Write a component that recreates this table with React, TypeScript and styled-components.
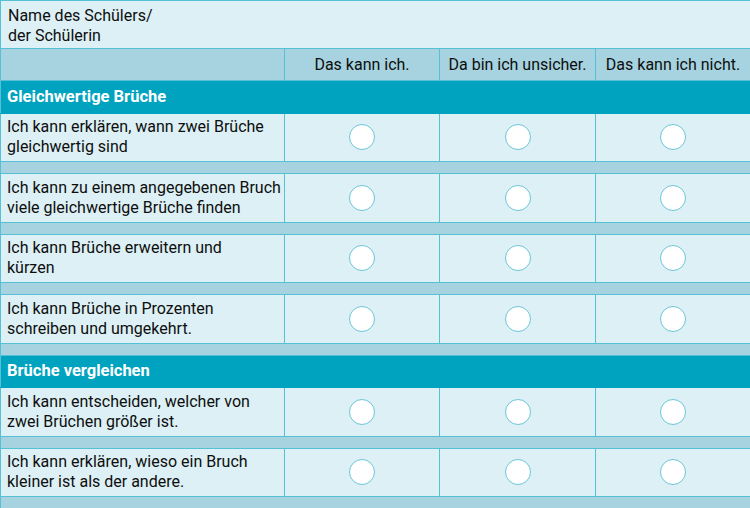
import React from "react";
import styled, { createGlobalStyle } from "styled-components";

const Global = createGlobalStyle`
  html, body { margin: 0; padding: 0; background: #ffffff; }
  body { font-family: Roboto, "Noto Sans", sans-serif; }
`;

const C = {
  light: "#dcf0f5",
  mid: "#a6d3df",
  teal: "#00a3bf",
  line: "#56c0d4",
  text: "#0e0e0e",
};

const Table = styled.table`
  width: 750px;
  border-collapse: collapse;
  table-layout: fixed;
  font-size: 16px;
  line-height: 20px;
  color: ${C.text};
`;

const NameCell = styled.td`
  height: 42px;
  padding: 5px 7px 0;
  vertical-align: top;
  background: ${C.light};
  border: 1px solid ${C.line};
`;

const HeadCell = styled.td`
  height: 31px;
  padding: 0 4px;
  text-align: center;
  vertical-align: middle;
  background: ${C.mid};
  border: 1px solid ${C.line};
  white-space: nowrap;
`;

const SectionCell = styled.td`
  height: 31.5px;
  padding: 0 6px;
  vertical-align: middle;
  background: ${C.teal};
  color: #ffffff;
  font-size: 16.5px;
  font-weight: 700;
  border: 1px solid ${C.teal};
  border-left-color: ${C.line};
  border-right-color: ${C.line};
`;

const TextCell = styled.td`
  height: 47.5px;
  padding: 0 6px;
  vertical-align: middle;
  white-space: nowrap;
  background: ${C.light};
  border: 1px solid ${C.line};
`;

const CircleCell = styled.td`
  background: ${C.light};
  border: 1px solid ${C.line};
  text-align: center;
  vertical-align: middle;
`;

const Circle = styled.span`
  display: inline-block;
  width: 24px;
  height: 24px;
  border-radius: 50%;
  background: #ffffff;
  border: 1.5px solid #6cc6d8;
  vertical-align: middle;
`;

const SpacerCell = styled.td`
  height: 11px;
  padding: 0;
  background: ${C.mid};
  border: 1px solid ${C.line};
`;

type Section = { title: string; items: string[][] };

const sections: Section[] = [
  {
    title: "Gleichwertige Brüche",
    items: [
      ["Ich kann erklären, wann zwei Brüche", "gleichwertig sind"],
      ["Ich kann zu einem angegebenen Bruch", "viele gleichwertige Brüche finden"],
      ["Ich kann Brüche erweitern und", "kürzen"],
      ["Ich kann Brüche in Prozenten", "schreiben und umgekehrt."],
    ],
  },
  {
    title: "Brüche vergleichen",
    items: [
      ["Ich kann entscheiden, welcher von", "zwei Brüchen größer ist."],
      ["Ich kann erklären, wieso ein Bruch", "kleiner ist als der andere."],
    ],
  },
];

export default function App() {
  return (
    <>
      <Global />
      <Table>
        <colgroup>
          <col style={{ width: 284 }} />
          <col style={{ width: 155 }} />
          <col style={{ width: 156 }} />
          <col style={{ width: 155 }} />
        </colgroup>
        <tbody>
          <tr>
            <NameCell colSpan={4}>
              Name des Schülers/
              <br />
              der Schülerin
            </NameCell>
          </tr>
          <tr>
            <HeadCell />
            <HeadCell>Das kann ich.</HeadCell>
            <HeadCell>Da bin ich unsicher.</HeadCell>
            <HeadCell>Das kann ich nicht.</HeadCell>
          </tr>
          {sections.map((s) => (
            <React.Fragment key={s.title}>
              <tr>
                <SectionCell colSpan={4}>{s.title}</SectionCell>
              </tr>
              {s.items.map((it) => (
                <React.Fragment key={it[0]}>
                  <tr>
                    <TextCell>
                      {it[0]}
                      <br />
                      {it[1]}
                    </TextCell>
                    <CircleCell>
                      <Circle />
                    </CircleCell>
                    <CircleCell>
                      <Circle />
                    </CircleCell>
                    <CircleCell>
                      <Circle />
                    </CircleCell>
                  </tr>
                  <tr>
                    <SpacerCell colSpan={4} />
                  </tr>
                </React.Fragment>
              ))}
            </React.Fragment>
          ))}
        </tbody>
      </Table>
    </>
  );
}
